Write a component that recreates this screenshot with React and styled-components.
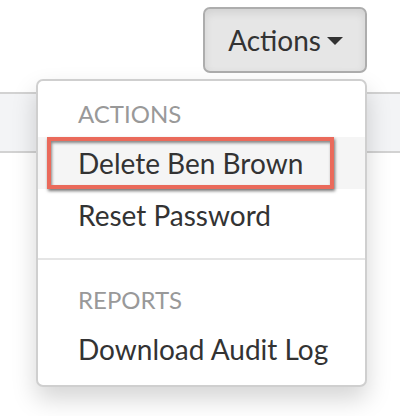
import React from "react";
import styled, { createGlobalStyle } from "styled-components";

const GlobalStyle = createGlobalStyle`
  html, body {
    margin: 0;
    padding: 0;
    background: #fff;
    font-family: Lato, "Noto Sans", "Liberation Sans", sans-serif;
  }
`;

const sections = [
  { title: "ACTIONS", items: [{ label: "Delete Ben Brown", marked: true }, { label: "Reset Password" }] },
  { title: "REPORTS", items: [{ label: "Download Audit Log" }] },
];

function App() {
  return (
    <Page>
      <GlobalStyle />
      <Toolbar>
        <Dropdown>
          <ToggleButton>
            Actions
            <Caret />
          </ToggleButton>
          <Menu>
            {sections.map((section, i) => (
              <React.Fragment key={section.title}>
                {i > 0 && <Divider />}
                <Header>{section.title}</Header>
                {section.items.map((item) => (
                  <Item key={item.label} $active={item.marked}>
                    {item.label}
                    {item.marked && <Highlight />}
                  </Item>
                ))}
              </React.Fragment>
            ))}
          </Menu>
        </Dropdown>
      </Toolbar>
      <Band />
    </Page>
  );
}

const Page = styled.div`
  width: 400px;
  height: 416px;
  overflow: hidden;
  background: #fff;
`;

const Toolbar = styled.div`
  display: flex;
  justify-content: flex-end;
  height: 92px;
  box-sizing: border-box;
  padding: 7px 33px 0 0;
`;

const Dropdown = styled.div`
  position: relative;
  height: 66px;
  z-index: 2;
`;

const ToggleButton = styled.button`
  display: flex;
  align-items: center;
  height: 66px;
  padding: 0 22px 0 23px;
  background: #e6e6e6;
  border: 2px solid #adadad;
  border-radius: 7px;
  box-shadow: inset 0 4px 8px rgba(0, 0, 0, 0.09);
  font-family: Lato, "Noto Sans", sans-serif;
  font-size: 28px;
  color: #333;
  cursor: pointer;
`;

const Caret = styled.span`
  display: inline-block;
  width: 0;
  height: 0;
  margin-left: 6px;
  margin-top: 2px;
  border-top: 8px solid #333;
  border-left: 8px solid transparent;
  border-right: 8px solid transparent;
`;

const Menu = styled.div`
  position: absolute;
  top: 72px;
  right: 0;
  width: 331px;
  box-sizing: border-box;
  padding: 10px 0;
  background: #fff;
  border: 2px solid #cfcfcf;
  border-radius: 7px;
  box-shadow: 0 12px 24px rgba(0, 0, 0, 0.17);
`;

const Header = styled.div`
  padding: 6px 40px;
  font-size: 24px;
  line-height: 34px;
  color: #999;
`;

const Item = styled.div`
  position: relative;
  padding: 6px 40px;
  font-size: 28px;
  line-height: 40px;
  color: #333;
  background: ${(p) => (p.$active ? "#f5f5f5" : "transparent")};
  white-space: nowrap;
`;

const Highlight = styled.span`
  position: absolute;
  left: 9px;
  right: 31px;
  top: 0;
  bottom: 0;
  border: 4px solid #ea6a5b;
  box-shadow: 1px 2px 3px rgba(0, 0, 0, 0.55), inset 1px 2px 3px rgba(0, 0, 0, 0.45);
`;

const Divider = styled.div`
  height: 2px;
  margin: 17px 0;
  background: #e5e5e5;
`;

const Band = styled.div`
  height: 57px;
  background: #f3f4f6;
  border-top: 2px solid #d2d2d2;
  border-bottom: 2px solid #d2d2d2;
`;

export default App;
